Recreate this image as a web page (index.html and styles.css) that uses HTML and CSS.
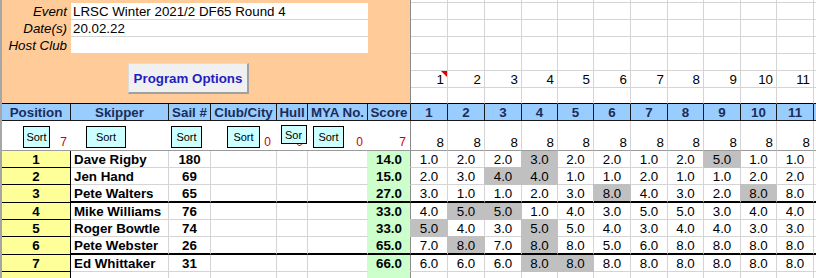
FILE: index.html
```html
<!DOCTYPE html>
<html lang="en">
<head>
<meta charset="utf-8">
<title>LRSC Winter 2021/2 DF65 Round 4</title>
<link rel="stylesheet" href="styles.css">
</head>
<body>
<table class="sheet">
<colgroup>
<col class="c-pos"><col class="c-skp"><col class="c-sail"><col class="c-club"><col class="c-hull"><col class="c-mya"><col class="c-scr">
<col class="c-37"><col class="c-37"><col class="c-37"><col class="c-36"><col class="c-36"><col class="c-37"><col class="c-37"><col class="c-36"><col class="c-37"><col class="c-36"><col class="c-37">
<col class="c-tail">
</colgroup>
<tbody>
<tr class="r0"><td class="or frz" colspan="7"></td><td class="g"></td><td class="g"></td><td class="g"></td><td class="g"></td><td class="g"></td><td class="g"></td><td class="g"></td><td class="g"></td><td class="g"></td><td class="g"></td><td class="g"></td><td class="g tail"></td></tr>
<tr class="rr"><td class="or lbl">Event</td><td class="fld" colspan="5">LRSC Winter 2021/2 DF65 Round 4</td><td class="or frz" rowspan="3"></td><td class="g"></td><td class="g"></td><td class="g"></td><td class="g"></td><td class="g"></td><td class="g"></td><td class="g"></td><td class="g"></td><td class="g"></td><td class="g"></td><td class="g"></td><td class="g tail"></td></tr>
<tr class="rr"><td class="or lbl">Date(s)</td><td class="fld" colspan="5">20.02.22</td><td class="g"></td><td class="g"></td><td class="g"></td><td class="g"></td><td class="g"></td><td class="g"></td><td class="g"></td><td class="g"></td><td class="g"></td><td class="g"></td><td class="g"></td><td class="g tail"></td></tr>
<tr class="rr"><td class="or lbl">Host Club</td><td class="fld fld-last" colspan="5"></td><td class="g"></td><td class="g"></td><td class="g"></td><td class="g"></td><td class="g"></td><td class="g"></td><td class="g"></td><td class="g"></td><td class="g"></td><td class="g"></td><td class="g"></td><td class="g tail"></td></tr>
<tr class="rr"><td class="or frz panel" colspan="7" rowspan="3"><button class="prog" type="button">Program Options</button></td><td class="g"></td><td class="g"></td><td class="g"></td><td class="g"></td><td class="g"></td><td class="g"></td><td class="g"></td><td class="g"></td><td class="g"></td><td class="g"></td><td class="g"></td><td class="g tail"></td></tr>
<tr class="rr"><td class="g num note">1</td><td class="g num">2</td><td class="g num">3</td><td class="g num">4</td><td class="g num">5</td><td class="g num">6</td><td class="g num">7</td><td class="g num">8</td><td class="g num">9</td><td class="g num">10</td><td class="g num">11</td><td class="g tail"></td></tr>
<tr class="r6"><td class="g"></td><td class="g"></td><td class="g"></td><td class="g"></td><td class="g"></td><td class="g"></td><td class="g"></td><td class="g"></td><td class="g"></td><td class="g"></td><td class="g"></td><td class="g tail"></td></tr>

<tr class="hdr"><th>Position</th><th>Skipper</th><th>Sail #</th><th>Club/City</th><th>Hull</th><th>MYA No.</th><th>Score</th><th>1</th><th>2</th><th>3</th><th>4</th><th>5</th><th>6</th><th>7</th><th>8</th><th>9</th><th>10</th><th>11</th><th class="tail"></th></tr>

<tr class="sortrow">
<td><button class="sbtn sb-pos" type="button">Sort</button><span class="cnt">7</span></td>
<td><button class="sbtn sb-skp" type="button">Sort</button></td>
<td><button class="sbtn sb-sail" type="button">Sort</button></td>
<td class="pr6"><button class="sbtn sb-club" type="button">Sort</button><span class="cnt">0</span></td>
<td class="pr5"><span class="cnt">0</span><button class="sbtn sb-hull" type="button"><span class="clip">Sort</span></button></td>
<td class="pr5"><button class="sbtn sb-mya" type="button">Sort</button><span class="cnt">0</span></td>
<td class="frz"><span class="cnt">7</span></td>
<td class="g">8</td><td class="g">8</td><td class="g">8</td><td class="g">8</td><td class="g">8</td><td class="g">8</td><td class="g">8</td><td class="g">8</td><td class="g">8</td><td class="g">8</td><td class="g">8</td><td class="g tail"></td>
</tr>

<tr class="row"><td class="pos">1</td><td class="g skp">Dave Rigby</td><td class="g sail">180</td><td class="g"></td><td class="g"></td><td class="g mya"></td><td class="scr">14.0</td><td class="g rc">1.0</td><td class="g rc">2.0</td><td class="g rc">2.0</td><td class="g rc d">3.0</td><td class="g rc">2.0</td><td class="g rc">2.0</td><td class="g rc">1.0</td><td class="g rc">2.0</td><td class="g rc d">5.0</td><td class="g rc">1.0</td><td class="g rc">1.0</td><td class="g tail"></td></tr>
<tr class="row"><td class="pos">2</td><td class="g skp">Jen Hand</td><td class="g sail">69</td><td class="g"></td><td class="g"></td><td class="g mya"></td><td class="scr">15.0</td><td class="g rc">2.0</td><td class="g rc">3.0</td><td class="g rc d">4.0</td><td class="g rc d">4.0</td><td class="g rc">1.0</td><td class="g rc">1.0</td><td class="g rc">2.0</td><td class="g rc">1.0</td><td class="g rc">1.0</td><td class="g rc">2.0</td><td class="g rc">2.0</td><td class="g tail"></td></tr>
<tr class="row thick"><td class="pos">3</td><td class="g skp">Pete Walters</td><td class="g sail">65</td><td class="g"></td><td class="g"></td><td class="g mya"></td><td class="scr">27.0</td><td class="g rc">3.0</td><td class="g rc">1.0</td><td class="g rc">1.0</td><td class="g rc">2.0</td><td class="g rc">3.0</td><td class="g rc d">8.0</td><td class="g rc">4.0</td><td class="g rc">3.0</td><td class="g rc">2.0</td><td class="g rc d">8.0</td><td class="g rc">8.0</td><td class="g tail"></td></tr>
<tr class="row after-thick"><td class="pos">4</td><td class="g skp">Mike Williams</td><td class="g sail">76</td><td class="g"></td><td class="g"></td><td class="g mya"></td><td class="scr">33.0</td><td class="g rc">4.0</td><td class="g rc d">5.0</td><td class="g rc d">5.0</td><td class="g rc">1.0</td><td class="g rc">4.0</td><td class="g rc">3.0</td><td class="g rc">5.0</td><td class="g rc">5.0</td><td class="g rc">3.0</td><td class="g rc">4.0</td><td class="g rc">4.0</td><td class="g tail"></td></tr>
<tr class="row"><td class="pos">5</td><td class="g skp">Roger Bowtle</td><td class="g sail">74</td><td class="g"></td><td class="g"></td><td class="g mya"></td><td class="scr">33.0</td><td class="g rc d">5.0</td><td class="g rc">4.0</td><td class="g rc">3.0</td><td class="g rc d">5.0</td><td class="g rc">5.0</td><td class="g rc">4.0</td><td class="g rc">3.0</td><td class="g rc">4.0</td><td class="g rc">4.0</td><td class="g rc">3.0</td><td class="g rc">3.0</td><td class="g tail"></td></tr>
<tr class="row thick"><td class="pos">6</td><td class="g skp">Pete Webster</td><td class="g sail">26</td><td class="g"></td><td class="g"></td><td class="g mya"></td><td class="scr">65.0</td><td class="g rc">7.0</td><td class="g rc d">8.0</td><td class="g rc">7.0</td><td class="g rc d">8.0</td><td class="g rc">8.0</td><td class="g rc">5.0</td><td class="g rc">6.0</td><td class="g rc">8.0</td><td class="g rc">8.0</td><td class="g rc">8.0</td><td class="g rc">8.0</td><td class="g tail"></td></tr>
<tr class="row after-thick"><td class="pos">7</td><td class="g skp">Ed Whittaker</td><td class="g sail">31</td><td class="g"></td><td class="g"></td><td class="g mya"></td><td class="scr">66.0</td><td class="g rc">6.0</td><td class="g rc">6.0</td><td class="g rc">6.0</td><td class="g rc d">8.0</td><td class="g rc d">8.0</td><td class="g rc">8.0</td><td class="g rc">8.0</td><td class="g rc">8.0</td><td class="g rc">8.0</td><td class="g rc">8.0</td><td class="g rc">8.0</td><td class="g tail"></td></tr>
<tr class="row"><td class="pos"></td><td class="g skp"></td><td class="g sail"></td><td class="g"></td><td class="g"></td><td class="g mya"></td><td class="scr"></td><td class="g rc"></td><td class="g rc"></td><td class="g rc"></td><td class="g rc"></td><td class="g rc"></td><td class="g rc"></td><td class="g rc"></td><td class="g rc"></td><td class="g rc"></td><td class="g rc"></td><td class="g rc"></td><td class="g tail"></td></tr>
</tbody>
</table>
</body>
</html>
```

FILE: styles.css
```css
html, body {
  margin: 0;
  padding: 0;
  overflow: hidden;
  background: #fff;
}

body {
  font-family: "Liberation Sans", Arial, sans-serif;
  font-size: 13.33px;
  color: #000;
}

.sheet {
  box-sizing: border-box;
  width: 816px;
  table-layout: fixed;
  border-collapse: separate;
  border-spacing: 0;
  border-left: 2px solid #a6a6a6;
}

.c-pos { width: 69px; }
.c-skp { width: 98px; }
.c-sail { width: 42px; }
.c-club { width: 66px; }
.c-hull { width: 31px; }
.c-mya { width: 60px; }
.c-scr { width: 43px; }
.c-37 { width: 37px; }
.c-36 { width: 36px; }
.c-tail { width: 2px; }

.sheet td,
.sheet th {
  padding: 0 3px;
  line-height: 15px;
  white-space: nowrap;
  overflow: hidden;
}

/* row heights */
.r0 { height: 3px; }
.rr { height: 17px; }
.r6 { height: 16px; }
.hdr { height: 17px; }
.sortrow { height: 30px; }
.row { height: 17px; }
.row.thick { height: 18px; }

/* generic grid cell */
.g {
  border-right: 1px solid #d4d4d4;
  border-bottom: 1px solid #d4d4d4;
}
.sheet .tail { border-right: none; padding: 0; }
.r6 .g { border-bottom-color: #000; }

/* top (orange) panel */
.or { background: #ffcc99; }
.frz { border-right: 1px solid #8c8c8c; }
.lbl {
  text-align: right;
  font-style: italic;
}
.sheet .lbl { padding-right: 4px; }
.fld {
  background: #fff;
  border-bottom: 1px solid #d4d4d4;
}
.sheet .fld { padding-left: 2px; }
.fld-last { border-bottom-color: #ffcc99; }
.sheet .panel {
  vertical-align: top;
  padding: 9px 0 0 126px;
  border-bottom: 1px solid #000;
}
.prog {
  display: block;
  box-sizing: border-box;
  width: 121px;
  height: 31px;
  margin: 0;
  padding: 0;
  background: #f0f0f0;
  border-style: solid;
  border-width: 1px 2px 2px 1px;
  border-color: #dcdcdc #a0a0a0 #a0a0a0 #dcdcdc;
  border-radius: 0;
  font-family: "Liberation Sans", Arial, sans-serif;
  font-size: 13.33px;
  font-weight: bold;
  color: #1f1fbd;
}

.num { text-align: right; position: relative; }
.note::after {
  content: "";
  position: absolute;
  top: 0;
  right: 0;
  border-top: 6px solid #e00000;
  border-left: 6px solid transparent;
}

/* header row */
.hdr th {
  background: #99ccff;
  color: #1b2c58;
  font-weight: bold;
  text-align: center;
  border-right: 1px solid #1a1a1a;
  border-bottom: 1px solid #1a1a1a;
  padding: 0;
}
.hdr th.tail { border-right: none; }

/* sort row */
.sortrow td {
  position: relative;
  vertical-align: bottom;
  text-align: right;
  border-bottom: 1px solid #9a9a9a;
  padding: 0 4px 0 0;
}
.sortrow .pr6 { padding-right: 6px; }
.sortrow .pr5 { padding-right: 5px; }
.sortrow .g { padding-right: 3px; }
.cnt {
  color: #cc0000;
  font-size: 12px;
}
.sbtn {
  position: absolute;
  top: 5px;
  height: 22px;
  box-sizing: border-box;
  margin: 0;
  padding: 0;
  background: #ccffff;
  border: 1px solid #000;
  border-radius: 0;
  font-family: "Liberation Sans", Arial, sans-serif;
  font-size: 11px;
  color: #000;
  text-align: center;
  white-space: nowrap;
  overflow: hidden;
}
.sb-pos { left: 21px; width: 27px; }
.sb-skp { left: 15px; width: 40px; }
.sb-sail { left: 2px; width: 31px; }
.sb-club { left: 16px; width: 33px; }
.sb-hull {
  left: 4px;
  top: 4px;
  width: 26px;
  height: 19px;
  text-align: left;
  padding-left: 3px;
}
.clip {
  display: inline-block;
  width: 17px;
  overflow: hidden;
  vertical-align: top;
}
.sb-mya { left: 5px; width: 31px; }

/* data rows */
.pos {
  background: #ffff99;
  font-weight: bold;
  text-align: center;
  border-right: 1px solid #000;
  border-bottom: 1px solid #000;
}
.skp { font-weight: bold; }
.sail { font-weight: bold; text-align: center; }
.mya { border-right-color: #ccffcc; }
.scr {
  background: #ccffcc;
  font-weight: bold;
  text-align: center;
  border-bottom: 1px solid #ccffcc;
  border-right: 1px solid #8c8c8c;
}
.rc { text-align: center; }
.d {
  background: #c0c0c0;
  border-right-color: #c0c0c0;
  border-bottom-color: #c0c0c0;
  box-shadow: -1px -1px 0 #c0c0c0;
}
.after-thick .d { box-shadow: -1px 0 0 #c0c0c0; }
.thick > td:not(.pos) { border-bottom: 2px solid #000; }
```
